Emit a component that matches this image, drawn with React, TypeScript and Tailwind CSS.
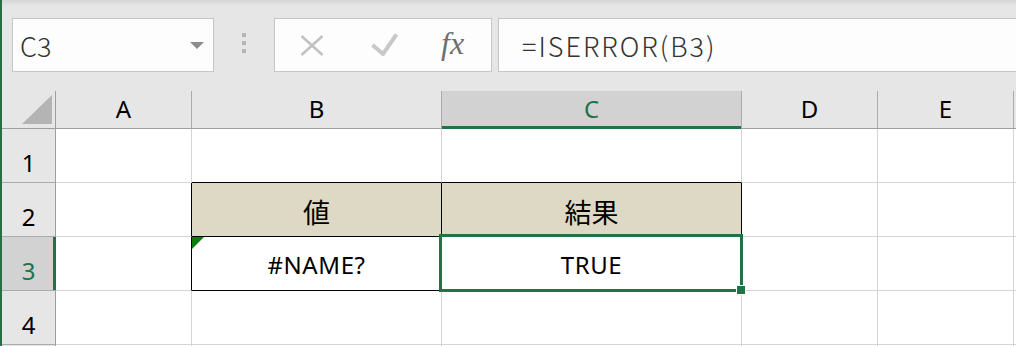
import React from "react";

const FONT = { fontFamily: '"Noto Sans", "Noto Sans CJK JP", sans-serif' };
const CJK = { fontFamily: '"Noto Sans CJK JP", "Noto Sans", sans-serif' };

function ColHeader({ label, selected }: { label: string; selected?: boolean }) {
  return (
    <div
      className={
        "relative flex items-end justify-center pb-[7px] border-r border-b border-r-[#ababab] border-b-[#9e9e9e] text-[24px] leading-[24px] " +
        (selected ? "bg-[#d2d2d2] text-[#217346]" : "bg-[#e6e6e6] text-black")
      }
    >
      {label}
      {selected && <div className="absolute left-0 right-0 bottom-[-1px] h-[3px] bg-[#217346]" />}
    </div>
  );
}

function RowHeader({ label, selected }: { label?: string; selected?: boolean }) {
  return (
    <div
      className={
        "relative flex items-end justify-center pb-[7px] border-r border-b border-r-[#9e9e9e] border-b-[#ababab] text-[24px] leading-[24px] " +
        (selected ? "bg-[#d2d2d2] text-[#217346]" : "bg-[#e6e6e6] text-black")
      }
    >
      {label}
      {selected && <div className="absolute top-0 bottom-0 right-[-1px] w-[3px] bg-[#217346]" />}
    </div>
  );
}

function Cell({
  className = "",
  tan,
  children,
}: {
  className?: string;
  tan?: boolean;
  children?: React.ReactNode;
}) {
  return (
    <div
      className={
        "relative flex items-center justify-center border-r border-b border-[#d4d4d4] text-[24px] leading-[24px] text-black " +
        (tan ? "bg-[#ddd9c4] " : "bg-white ") +
        className
      }
    >
      {children}
    </div>
  );
}

export default function App() {
  return (
    <div className="w-[1016px] h-[346px] overflow-hidden border-l-2 border-[#217346] bg-white" style={FONT}>
      {/* Formula bar band */}
      <div className="relative h-[91px] bg-[#e6e6e6] flex items-start pt-[18px] pl-[10px]">
        <div className="absolute left-0 right-0 top-0 h-[6px] bg-gradient-to-b from-[#d6d6d6] to-[#e6e6e6]" />
        {/* Name box */}
        <div className="relative w-[202px] h-[54px] shrink-0 bg-[#fdfdfd] border border-[#c6c6c6] flex items-center justify-between pl-[7px] pr-[9px]">
          <span className="text-[27px] leading-[27px] text-[#333333] font-light" style={CJK}>C3</span>
          <svg width="14" height="7" viewBox="0 0 14 7">
            <path d="M0 0 H14 L7 7 Z" fill="#8c8c8c" />
          </svg>
        </div>
        {/* dots */}
        <div className="ml-[28px] mt-[15px] flex flex-col gap-[4px] shrink-0">
          <div className="w-[4px] h-[4px] bg-[#b4b4b4]" />
          <div className="w-[4px] h-[4px] bg-[#b4b4b4]" />
          <div className="w-[4px] h-[4px] bg-[#b4b4b4]" />
        </div>
        {/* buttons box */}
        <div className="relative ml-[28px] w-[218px] h-[54px] shrink-0 bg-[#fdfdfd] border border-[#c6c6c6]">
          <svg className="absolute left-[25px] top-[16px]" width="24" height="21" viewBox="0 0 24 21">
            <path d="M1.5 1 L22.5 20 M22.5 1 L1.5 20" stroke="#c2c2c2" strokeWidth="2.6" fill="none" />
          </svg>
          <svg className="absolute left-[96px] top-[14px]" width="27" height="23" viewBox="0 0 27 23">
            <path d="M1.5 12 L12 21 L25.5 1.5" stroke="#c8c8c8" strokeWidth="4" fill="none" />
          </svg>
          <span
            className="absolute left-[166px] top-[4px] text-[32px] leading-[40px] italic text-[#6e6e6e]"
            style={{ fontFamily: '"Liberation Serif", serif' }}
          >
            fx
          </span>
        </div>
        {/* formula input */}
        <div className="ml-[6px] flex-1 h-[54px] bg-[#fdfdfd] border border-r-0 border-[#c6c6c6] flex items-center pl-[23px] mr-[-2px]">
          <span className="text-[27px] leading-[27px] text-[#333333] font-light tracking-[2px]" style={CJK}>
            =ISERROR(B3)
          </span>
        </div>
      </div>

      {/* Grid */}
      <div className="grid grid-cols-[54px_136px_250px_300px_136px_136px_1fr] grid-rows-[38px_54px_54px_54px_54px_54px]">
        {/* header row */}
        <div className="relative bg-[#e6e6e6] border-r border-b border-r-[#9e9e9e] border-b-[#9e9e9e]">
          <svg className="absolute left-[20px] top-[4px]" width="30" height="29" viewBox="0 0 30 29">
            <path d="M30 0 V29 H0 Z" fill="#b4b4b4" />
          </svg>
        </div>
        <ColHeader label="A" />
        <ColHeader label="B" />
        <ColHeader label="C" selected />
        <ColHeader label="D" />
        <ColHeader label="E" />
        <div className="bg-[#e6e6e6] border-b border-[#9e9e9e]" />

        {/* row 1 */}
        <RowHeader label="1" />
        <Cell />
        <Cell className="border-b-black" />
        <Cell className="border-b-black" />
        <Cell />
        <Cell />
        <Cell className="border-r-0" />

        {/* row 2 */}
        <RowHeader label="2" />
        <Cell className="border-r-black" />
        <Cell tan className="border-r-black border-b-black">
          <span className="translate-y-[2px] text-[27px] leading-[27px]" style={CJK}>値</span>
        </Cell>
        <Cell tan className="border-r-black border-b-black">
          <span className="translate-y-[2px] text-[27px] leading-[27px]" style={CJK}>結果</span>
        </Cell>
        <Cell />
        <Cell />
        <Cell className="border-r-0" />

        {/* row 3 */}
        <RowHeader label="3" selected />
        <Cell className="border-r-black" />
        <Cell className="border-r-black border-b-black">
          <svg className="absolute left-0 top-0" width="12" height="12" viewBox="0 0 12 12">
            <path d="M0 0 H12 L0 12 Z" fill="#0a7d0a" />
          </svg>
          <span className="translate-y-[1px] tracking-[0.6px]">#NAME?</span>
        </Cell>
        <Cell className="z-10">
          <span className="translate-y-[1px] tracking-[0.6px]">TRUE</span>
          <div className="absolute left-[-3px] top-[-3px] right-[-2px] bottom-[-2px] border-[3px] border-[#217346] pointer-events-none" />
          <div className="absolute right-[-5px] bottom-[-5px] w-[10px] h-[10px] bg-white p-[1px]">
            <div className="w-full h-full bg-[#217346]" />
          </div>
        </Cell>
        <Cell />
        <Cell />
        <Cell className="border-r-0" />

        {/* row 4 */}
        <RowHeader label="4" />
        <Cell />
        <Cell />
        <Cell />
        <Cell />
        <Cell />
        <Cell className="border-r-0" />

        {/* row 5 */}
        <RowHeader />
        <Cell />
        <Cell />
        <Cell />
        <Cell />
        <Cell />
        <Cell className="border-r-0" />
      </div>
    </div>
  );
}
